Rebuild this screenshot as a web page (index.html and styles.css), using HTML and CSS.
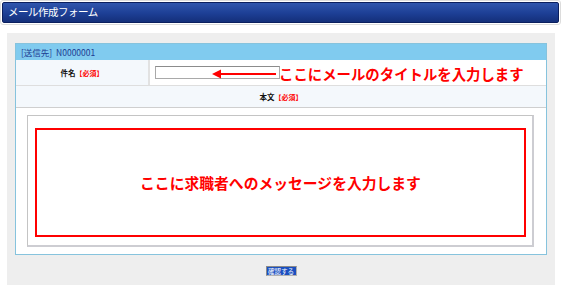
FILE: index.html
```html
<!DOCTYPE html>
<html lang="ja">
<head>
  <meta charset="UTF-8">
  <title>メール作成フォーム</title>
  <link rel="stylesheet" href="styles.css">
</head>
<body>
  <!-- Title -->
  <div class="title-frame">
    <h1 class="title-bar">メール作成フォーム</h1>
  </div>

  <!-- Form panel -->
  <div class="panel">
    <div class="form-box">
      <div class="to-row">[送信先]&nbsp; N0000001</div>

      <div class="subject-row">
        <div class="label-cell">件名<span class="req">【必須】</span></div>
        <div class="input-cell">
          <input type="text" class="subject-input">
          <div class="note note-subject">
            <svg class="arrow" width="64" height="10" viewBox="0 0 64 10">
              <line x1="6" y1="5" x2="64" y2="5" stroke="#ff0000" stroke-width="2"/>
              <polygon points="0,5 9,0.5 9,9.5" fill="#ff0000"/>
            </svg>
            <span>ここにメールのタイトルを入力します</span>
          </div>
        </div>
      </div>

      <div class="body-label">本文<span class="req">【必須】</span></div>

      <div class="body-cell">
        <div class="textarea">
          <div class="msg-box">ここに求職者へのメッセージを入力します</div>
        </div>
      </div>
    </div>

    <div class="actions">
      <button type="button" class="btn-confirm">確認する</button>
    </div>
  </div>
</body>
</html>
```

FILE: styles.css
```css
/* Global */
* {
  margin: 0;
  padding: 0;
  box-sizing: border-box;
}

body {
  width: 562px;
  background-color: white;
  font-family: "Noto Sans CJK JP", "Noto Sans", sans-serif;
  color: #222;
}

/* Title bar */
.title-frame {
  width: 561px;
  height: 25px;
  padding: 1px;
  border: 1px solid #dcdcdc;
  border-radius: 3px;
}

.title-bar {
  height: 21px;
  padding-left: 5px;
  border: 1px solid #0b1f5e;
  border-radius: 2px;
  background: linear-gradient(to bottom, #2f55ad, #1d3f95 55%, #142f7a);
  color: white;
  font-size: 10.5px;
  font-weight: 400;
  line-height: 18px;
  letter-spacing: -0.5px;
}

/* Panel */
.panel {
  width: 548px;
  margin: 8px 0 0 7px;
  padding: 10px 8px 9px 8px;
  background-color: #eeeeee;
}

.form-box {
  border: 1px solid #86c3dd;
  background-color: white;
}

.to-row {
  height: 16px;
  padding-left: 5px;
  background-color: #80cbef;
  color: #1c3b92;
  font-size: 8.5px;
  line-height: 16px;
}

.subject-row {
  display: flex;
  height: 26px;
  border-bottom: 1px solid #dedede;
}

.label-cell {
  width: 134px;
  border-right: 2px solid #e2e2e2;
  background-color: #f4f8fc;
  font-size: 7.5px;
  font-weight: 700;
  line-height: 25px;
  text-align: center;
  color: #111;
}

.req {
  color: #ff0000;
  font-size: 7px;
}

.input-cell {
  position: relative;
  flex: 1;
  padding: 6px 0 0 5px;
}

.subject-input {
  display: block;
  width: 125px;
  height: 13px;
  border: 1px solid #a9a9a9;
  border-top-color: #8c8c8c;
  background: white;
}

.note {
  position: absolute;
  display: flex;
  align-items: center;
  color: #ff0000;
  font-weight: 700;
  white-space: nowrap;
}

.note-subject {
  top: 3px;
  left: 62px;
  font-size: 14.4px;
}

.arrow {
  margin-right: 3px;
}

.body-label {
  height: 22px;
  border-bottom: 1px solid #cfcfcf;
  background-color: #f4f8fc;
  font-size: 7.5px;
  font-weight: 700;
  line-height: 21px;
  text-align: center;
  color: #111;
}

.body-cell {
  padding: 7px 12px 7px 11px;
}

.textarea {
  height: 132px;
  padding: 12px 6px 8px 7px;
  border: 1px solid #c4c4c4;
  border-right: 2px solid #cdcdd2;
  border-bottom: 2px solid #cdcdd2;
  background-color: white;
}

.msg-box {
  display: flex;
  align-items: center;
  justify-content: center;
  height: 109px;
  border: 2px solid #ff0000;
  color: #ff0000;
  font-size: 14.8px;
  font-weight: 700;
}

/* Button */
.actions {
  display: flex;
  justify-content: center;
  padding-top: 11px;
}

.btn-confirm {
  width: 31px;
  height: 10px;
  border: 1px solid #8a8a8a;
  border-right-color: #b0b0b0;
  border-bottom-color: #b0b0b0;
  background-color: #1b4fbf;
  color: white;
  font-family: "Noto Sans CJK JP", sans-serif;
  font-size: 6.5px;
  line-height: 8px;
}
```
